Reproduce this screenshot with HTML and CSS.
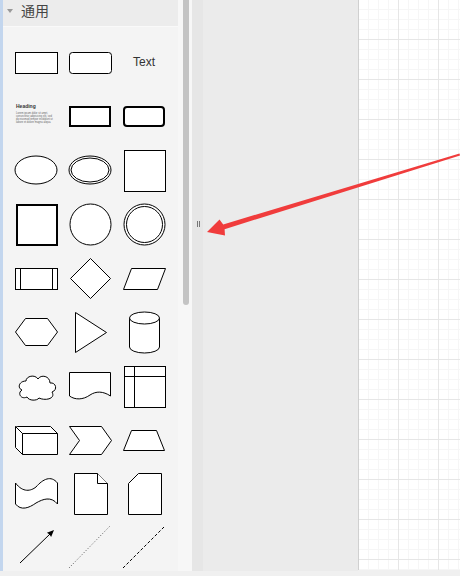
FILE: index.html
```html
<!DOCTYPE html>
<html lang="zh">

<head>
    <meta charset="UTF-8">
    <title>通用图形</title>
    <link rel="stylesheet" href="styles.css">
</head>

<body>
    <div class="app">
        <div class="edge"></div>

        <aside class="sidebar">
            <div class="sidebar-head">
                <span class="caret"></span>
                <span>通用</span>
            </div>

            <section class="shapes">
                <!-- rij 1 -->
                <svg viewBox="0 0 54 54"><rect class="s" x="6.5" y="17.5" width="42" height="21"/></svg>
                <svg viewBox="0 0 54 54"><rect class="s" x="6.5" y="17.5" width="42" height="21" rx="3"/></svg>
                <svg viewBox="0 0 54 54"><text class="label" x="27" y="31" text-anchor="middle">Text</text></svg>

                <!-- rij 2 -->
                <svg viewBox="0 0 54 54">
                    <text class="heading" x="7" y="19">Heading</text>
                    <text class="lorem" x="7" y="25">Lorem ipsum dolor sit amet,</text>
                    <text class="lorem" x="7" y="28">consectetur adipisicing elit, sed</text>
                    <text class="lorem" x="7" y="31">do eiusmod tempor incididunt ut</text>
                    <text class="lorem" x="7" y="34">labore et dolore magna aliqua.</text>
                </svg>
                <svg viewBox="0 0 54 54"><rect class="s thick" x="7" y="18" width="40" height="19"/></svg>
                <svg viewBox="0 0 54 54"><rect class="s thick" x="7" y="18" width="40" height="19" rx="3"/></svg>

                <!-- rij 3 -->
                <svg viewBox="0 0 54 54"><ellipse class="s" cx="27" cy="27" rx="21" ry="14"/></svg>
                <svg viewBox="0 0 54 54">
                    <ellipse class="s" cx="27" cy="27" rx="21" ry="14"/>
                    <ellipse class="s" cx="27" cy="27" rx="19" ry="12"/>
                </svg>
                <svg viewBox="0 0 54 54"><rect class="s" x="7.5" y="7.5" width="41" height="41"/></svg>

                <!-- rij 4 -->
                <svg viewBox="0 0 54 54"><rect class="s thick" x="8" y="8" width="40" height="40"/></svg>
                <svg viewBox="0 0 54 54"><circle class="s" cx="27.5" cy="27.5" r="20.5"/></svg>
                <svg viewBox="0 0 54 54">
                    <circle class="s" cx="27.5" cy="27.5" r="20.5"/>
                    <circle class="s" cx="27.5" cy="27.5" r="18"/>
                </svg>

                <!-- rij 5 -->
                <svg viewBox="0 0 54 54">
                    <rect class="s" x="6.5" y="17.5" width="42" height="21"/>
                    <path class="s" d="M11.5 17.5 V38.5 M43.5 17.5 V38.5"/>
                </svg>
                <svg viewBox="0 0 54 54"><path class="s" d="M27.5 7.5 L47.5 27.5 L27.5 47.5 L7.5 27.5 Z"/></svg>
                <svg viewBox="0 0 54 54"><path class="s" d="M6.5 38.5 L14.5 17.5 H48.5 L40.5 38.5 Z"/></svg>

                <!-- rij 6 -->
                <svg viewBox="0 0 54 54"><path class="s" d="M6.5 27 L16.5 13.5 H38.5 L48.5 27 L38.5 40.5 H16.5 Z"/></svg>
                <svg viewBox="0 0 54 54"><path class="s" d="M12.5 7.5 L43.5 27.5 L12.5 47.5 Z"/></svg>
                <svg viewBox="0 0 54 54">
                    <path class="s" d="M12.5 13 A15 6 0 0 1 42.5 13 V42 A15 6 0 0 1 12.5 42 Z"/>
                    <path class="s" d="M12.5 13 A15 6 0 0 0 42.5 13"/>
                </svg>

                <!-- rij 7 -->
                <svg viewBox="0 0 54 54"><path class="s" d="M17 22 C10 22 8 29 13 31 C8 34 12 41 18 38 C20 42 28 42 30 39 C36 42 47 40 43 33 C49 31 47 23 41 24 C41 17 32 15 29 20 C26 15 17 17 17 22 Z"/></svg>
                <svg viewBox="0 0 54 54"><path class="s" d="M6.5 13.5 H47.5 V37 C40 32 33 32 27 36 C20 41 12 41 6.5 37 Z"/></svg>
                <svg viewBox="0 0 54 54">
                    <rect class="s" x="7.5" y="7.5" width="41" height="41"/>
                    <path class="s" d="M17.5 7.5 V48.5 M7.5 17.5 H48.5"/>
                </svg>

                <!-- rij 8 -->
                <svg viewBox="0 0 54 54">
                    <path class="s" d="M6.5 13.5 H41.5 L48.5 20.5 V41.5 H13.5 L6.5 34.5 Z"/>
                    <path class="s" d="M6.5 13.5 L13.5 20.5 H48.5 M13.5 20.5 V41.5"/>
                </svg>
                <svg viewBox="0 0 54 54"><path class="s" d="M6.5 13.5 H38.5 L48.5 27.5 L38.5 41.5 H6.5 L16.5 27.5 Z"/></svg>
                <svg viewBox="0 0 54 54"><path class="s" d="M6.5 37.5 L14.5 17.5 H39.5 L47.5 37.5 Z"/></svg>

                <!-- rij 9 -->
                <svg viewBox="0 0 54 54"><path class="s" d="M6.5 16 C14 26 22 24 27 20 C34 12 42 8 48.5 16 V37 C42 29 34 32 27 36 C20 41 12 44 6.5 37 Z"/></svg>
                <svg viewBox="0 0 54 54">
                    <path class="s" d="M11.5 6.5 H34.5 L44.5 16.5 V47.5 H11.5 Z"/>
                    <path class="s" d="M34.5 6.5 V16.5 H44.5"/>
                </svg>
                <svg viewBox="0 0 54 54"><path class="s" d="M21.5 6.5 H44.5 V47.5 H11.5 V16.5 Z"/></svg>

                <!-- rij 10 -->
                <svg viewBox="0 0 54 54">
                    <path class="line" d="M11 42 L41 13"/>
                    <path class="head" d="M45 9 L42.1 16 L40.6 13.4 L37.9 11.7 Z"/>
                </svg>
                <svg viewBox="0 0 54 54"><path class="line dotted" d="M6 47 L47 5"/></svg>
                <svg viewBox="0 0 54 54"><path class="line dashed" d="M6 47 L47 6"/></svg>
            </section>
        </aside>

        <div class="scroll">
            <div class="thumb"></div>
        </div>

        <div class="splitter">
            <span class="grip"></span>
        </div>

        <main class="workspace"></main>

        <div class="canvas"></div>

        <svg class="callout" viewBox="0 0 460 576">
            <path d="M207 232 L225 235.5 L224.6 229.2 L460 155.5 L459.5 153.5 L223.2 224.4 L219.5 219.5 Z"/>
        </svg>
    </div>
</body>

</html>
```

FILE: styles.css
```css
body {
    margin: 0;
    background-color: #f0f0f0;
    font-family: "Liberation Sans", "Noto Sans CJK SC", sans-serif;
}

.app {
    position: relative;
    display: flex;
    width: 460px;
    height: 571px;
    overflow: hidden;
}

.edge {
    width: 3px;
    background-color: #c3d6ee;
}

.sidebar {
    width: 175px;
    background-color: #f4f4f4;
    display: flex;
    flex-direction: column;
}

.sidebar-head {
    height: 22px;
    padding-bottom: 6px;
    background-color: #ececec;
    border-bottom: 1px solid #f9f9f9;
    display: flex;
    align-items: center;
    gap: 8px;
    padding-left: 4px;
    font-family: "Noto Sans CJK SC", sans-serif;
    font-size: 14px;
    color: #444;
}

.caret {
    width: 0;
    height: 0;
    border-left: 3px solid transparent;
    border-right: 3px solid transparent;
    border-top: 4px solid #999;
    margin-top: 1px;
}

.shapes {
    display: grid;
    grid-template-columns: repeat(3, 54px);
    grid-auto-rows: 54px;
    padding: 8px 0 0 6px;
}

.shapes svg {
    width: 54px;
    height: 54px;
    display: block;
}

.s {
    fill: #fff;
    stroke: #000;
    stroke-width: 1;
}

.thick {
    stroke-width: 2;
}

.label {
    font-family: "Liberation Sans", sans-serif;
    font-size: 12px;
    fill: #333;
}

.heading {
    font-family: "Liberation Sans", sans-serif;
    font-size: 5px;
    font-weight: bold;
    fill: #333;
}

.lorem {
    font-family: "Liberation Sans", sans-serif;
    font-size: 2.6px;
    fill: #666;
}

.line {
    fill: none;
    stroke: #000;
    stroke-width: 1;
}

.head {
    fill: #000;
}

.dotted {
    stroke: #555;
    stroke-dasharray: 1 2;
}

.dashed {
    stroke-dasharray: 3 2;
}

.scroll {
    width: 9px;
    padding-left: 5px;
    background-color: #f7f7f7;
}

.thumb {
    width: 6px;
    height: 305px;
    background-color: #c4c4c4;
    border-radius: 0 0 3px 3px;
}

.splitter {
    width: 11px;
    background-color: #e6e6e6;
    display: flex;
    align-items: flex-start;
    padding-top: 221px;
    box-sizing: border-box;
}

.grip {
    width: 1px;
    height: 6px;
    margin-left: 5px;
    border-left: 1px solid #777;
    border-right: 1px solid #777;
}

.workspace {
    width: 155px;
    background-color: #ebebeb;
}

.canvas {
    flex: 1;
    height: 570px;
    border-left: 1px solid #d0d0d0;
    background-color: #fff;
    background-image:
        linear-gradient(to right, #e6e6e6 1px, transparent 1px),
        linear-gradient(to bottom, #e6e6e6 1px, transparent 1px),
        linear-gradient(to right, #f6f6f6 1px, transparent 1px),
        linear-gradient(to bottom, #f6f6f6 1px, transparent 1px);
    background-size: 40px 40px, 40px 40px, 10px 10px, 10px 10px;
    background-position: 39px 0, 0 39px, 9px 0, 0 9px;
}

.callout {
    position: absolute;
    left: 0;
    top: 0;
    width: 460px;
    height: 576px;
    pointer-events: none;
}

.callout path {
    fill: #f03c3c;
}
```
